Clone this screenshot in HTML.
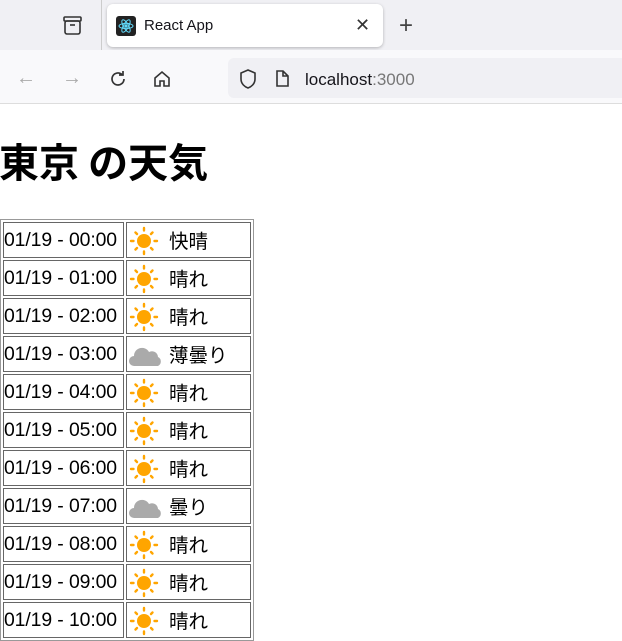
<html><head><style>
body{margin:0;width:622px;height:629px;overflow:hidden;background:#fff;font-family:"Liberation Sans","Noto Sans CJK JP",sans-serif;position:relative}
.tb{position:absolute;left:0;top:0;width:622px;height:50px;background:#f0f0f4}
.tab{position:absolute;left:107px;top:4px;width:276px;height:43px;background:#fff;border-radius:6px;box-shadow:0 1px 3px rgba(0,0,0,.25)}
.nav{position:absolute;left:0;top:50px;width:622px;height:53px;background:#f9f9fb;border-bottom:1px solid #ddd}
.url{position:absolute;left:228px;top:8px;width:400px;height:40px;background:#f0f0f4;border-radius:6px}
h1{position:absolute;left:-1px;top:136px;margin:0;font-size:40px;font-weight:bold;line-height:48px;font-family:"Noto Sans CJK JP",sans-serif}
table{position:absolute;left:0px;top:219px;border:1px solid #999;border-spacing:2px;font-family:"Liberation Sans","Noto Sans CJK JP",sans-serif;font-size:19.4px}
td{border:1px solid #666;height:34px;padding:0;line-height:34px;white-space:nowrap}
td.t{width:119px;letter-spacing:-0.1px}
td.w{width:125px;position:relative;padding-left:42px;box-sizing:border-box;font-size:19.5px;font-family:"Noto Sans CJK JP",sans-serif}
td.w svg{position:absolute;left:0px;top:1px}
</style></head><body>
<div class="tb">
<svg style="position:absolute;left:62px;top:15px" width="22" height="22" viewBox="0 0 22 22" fill="none" stroke="#333" stroke-width="1.6"><rect x="2" y="2" width="17" height="4" rx="1"/><rect x="3" y="6" width="15" height="13" rx="2"/><path d="M8 10h5"/></svg>
<div style="position:absolute;left:101px;top:0;width:1px;height:50px;background:#ccc"></div>
<div class="tab">
<div style="position:absolute;left:9px;top:12px;width:20px;height:20px;background:#222;border-radius:3px"></div>
<svg style="position:absolute;left:10px;top:13px" width="18" height="18" viewBox="0 0 18 18" fill="none" stroke="#61dafb" stroke-width="1"><ellipse cx="9" cy="9" rx="7" ry="2.6"/><ellipse cx="9" cy="9" rx="7" ry="2.6" transform="rotate(60 9 9)"/><ellipse cx="9" cy="9" rx="7" ry="2.6" transform="rotate(-60 9 9)"/><circle cx="9" cy="9" r="1.2" fill="#61dafb"/></svg>
<span style="position:absolute;left:37px;top:13px;font-size:15px;color:#15141a">React App</span>
<span style="position:absolute;left:248px;top:11px;font-size:18px;color:#333">✕</span>
</div>
<span style="position:absolute;left:399px;top:12px;font-size:24px;color:#444;font-weight:300">+</span>
</div>
<div class="nav">
<span style="position:absolute;left:16px;top:17px;font-size:20px;color:#aaa">←</span>
<span style="position:absolute;left:62px;top:17px;font-size:20px;color:#aaa">→</span>
<svg style="position:absolute;left:108px;top:19px" width="20" height="20" viewBox="0 0 20 20" fill="none" stroke="#333" stroke-width="1.7"><path d="M16 10a6 6 0 1 1-2-4.5"/><path d="M15 2v4h-4"/></svg>
<svg style="position:absolute;left:152px;top:19px" width="20" height="20" viewBox="0 0 20 20" fill="none" stroke="#333" stroke-width="1.6"><path d="M3 9l7-6 7 6v8H12v-5H8v5H3z"/></svg>
<div class="url">
<svg style="position:absolute;left:10px;top:10px" width="20" height="22" viewBox="0 0 20 22" fill="none" stroke="#333" stroke-width="1.6"><path d="M10 2l7 3v6c0 5-4 8-7 9-3-1-7-4-7-9V5z"/></svg>
<svg style="position:absolute;left:46px;top:11px" width="16" height="20" viewBox="0 0 16 20" fill="none" stroke="#333" stroke-width="1.6"><path d="M3 2h6l5 5v10H3zM9 2v5h5"/></svg>
<span style="position:absolute;left:77px;top:12px;font-size:17px;color:#15141a">localhost<span style="color:#777">:3000</span></span>
</div>
</div>
<h1>東京 の天気</h1>
<svg width="0" height="0" style="position:absolute"><defs>
<symbol id="sun" viewBox="0 0 34 34"><circle cx="17" cy="17" r="7" fill="#ffa500"/><g stroke="#ffa500" stroke-width="2.4" stroke-linecap="round"><path d="M17 4v2.5M17 27.5v2.5M4 17h2.5M27.5 17h2.5M8.5 8.5l1.5 1.5M24 24l1.5 1.5M8.5 25.5l1.5-1.5M24 10l1.5-1.5"/></g></symbol>
<symbol id="cloud" viewBox="0 0 34 34"><path d="M7 28a5 5 0 0 1 0-10 8 8 0 0 1 15-4 6 6 0 0 1 9 5 5 5 0 0 1 0 9z" fill="#aaa"/></symbol>
</defs></svg>
<table>
<tr><td class="t">01/19 - 00:00</td><td class="w"><svg width="34" height="34"><use href="#sun"/></svg>快晴</td></tr>
<tr><td class="t">01/19 - 01:00</td><td class="w"><svg width="34" height="34"><use href="#sun"/></svg>晴れ</td></tr>
<tr><td class="t">01/19 - 02:00</td><td class="w"><svg width="34" height="34"><use href="#sun"/></svg>晴れ</td></tr>
<tr><td class="t">01/19 - 03:00</td><td class="w"><svg width="34" height="34"><use href="#cloud"/></svg>薄曇り</td></tr>
<tr><td class="t">01/19 - 04:00</td><td class="w"><svg width="34" height="34"><use href="#sun"/></svg>晴れ</td></tr>
<tr><td class="t">01/19 - 05:00</td><td class="w"><svg width="34" height="34"><use href="#sun"/></svg>晴れ</td></tr>
<tr><td class="t">01/19 - 06:00</td><td class="w"><svg width="34" height="34"><use href="#sun"/></svg>晴れ</td></tr>
<tr><td class="t">01/19 - 07:00</td><td class="w"><svg width="34" height="34"><use href="#cloud"/></svg>曇り</td></tr>
<tr><td class="t">01/19 - 08:00</td><td class="w"><svg width="34" height="34"><use href="#sun"/></svg>晴れ</td></tr>
<tr><td class="t">01/19 - 09:00</td><td class="w"><svg width="34" height="34"><use href="#sun"/></svg>晴れ</td></tr>
<tr><td class="t">01/19 - 10:00</td><td class="w"><svg width="34" height="34"><use href="#sun"/></svg>晴れ</td></tr>
</table>
</body></html>
